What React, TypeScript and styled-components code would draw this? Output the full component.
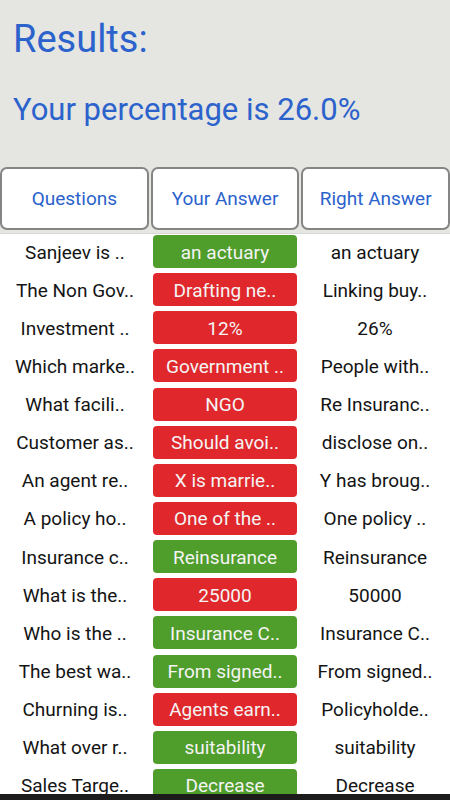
import React from 'react';
import styled, { createGlobalStyle } from 'styled-components';

const GlobalStyle = createGlobalStyle`
  html, body {
    margin: 0;
    padding: 0;
    background: #ffffff;
  }
  body {
    font-family: Roboto, "Noto Sans", sans-serif;
  }
`;

const Screen = styled.div`
  display: flex;
  flex-direction: column;
  width: 450px;
  height: 800px;
  overflow: hidden;
  background: #ffffff;
`;

const Summary = styled.div`
  display: flex;
  flex-direction: column;
  background: #e5e5e2;
  padding: 18px 13px 0 13px;
  height: 149px;
`;

const Title = styled.div`
  color: #2b62cc;
  font-size: 38px;
  line-height: 42px;
`;

const Percentage = styled.div`
  color: #2b62cc;
  font-size: 31px;
  line-height: 36px;
  margin-top: 32px;
`;

const HeaderRow = styled.div`
  display: flex;
  gap: 2px;
  padding: 0 0 3px 0;
  background: #e5e5e2;
  border-bottom: 1px solid #d8d8d6;
`;

const HeaderButton = styled.div`
  flex: 1;
  height: 59px;
  display: flex;
  align-items: center;
  justify-content: center;
  background: #ffffff;
  border: 2px solid #858585;
  border-radius: 7px;
  color: #2b62cc;
  font-size: 19px;
`;

const List = styled.div`
  flex: 1;
  display: flex;
  flex-direction: column;
  gap: 5.15px;
  padding-top: 1px;
  overflow: hidden;
`;

const Row = styled.div`
  display: grid;
  grid-template-columns: 150px 150px 150px;
  align-items: center;
  height: 33px;
  flex-shrink: 0;
`;

const Cell = styled.div`
  text-align: center;
  color: #141414;
  font-size: 19px;
  padding-top: 1px;
  white-space: nowrap;
`;

const Pill = styled.div<{ $correct: boolean }>`
  margin-left: 3px;
  width: 144px;
  height: 33px;
  box-sizing: border-box;
  padding-top: 1px;
  display: flex;
  align-items: center;
  justify-content: center;
  border-radius: 4px;
  background: ${(p) => (p.$correct ? '#4f9d2b' : '#e0282c')};
  color: #f4f4f4;
  font-size: 19px;
  white-space: nowrap;
`;

const NavEdge = styled.div`
  height: 6px;
  flex-shrink: 0;
  background: #1c1c1c;
`;

type Result = {
  question: string;
  yours: string;
  right: string;
  correct: boolean;
};

const results: Result[] = [
  { question: 'Sanjeev is ..', yours: 'an actuary', right: 'an actuary', correct: true },
  { question: 'The Non Gov..', yours: 'Drafting ne..', right: 'Linking buy..', correct: false },
  { question: 'Investment ..', yours: '12%', right: '26%', correct: false },
  { question: 'Which marke..', yours: 'Government ..', right: 'People with..', correct: false },
  { question: 'What facili..', yours: 'NGO', right: 'Re Insuranc..', correct: false },
  { question: 'Customer as..', yours: 'Should avoi..', right: 'disclose on..', correct: false },
  { question: 'An agent re..', yours: 'X is marrie..', right: 'Y has broug..', correct: false },
  { question: 'A policy ho..', yours: 'One of the ..', right: 'One policy ..', correct: false },
  { question: 'Insurance c..', yours: 'Reinsurance', right: 'Reinsurance', correct: true },
  { question: 'What is the..', yours: '25000', right: '50000', correct: false },
  { question: 'Who is the ..', yours: 'Insurance C..', right: 'Insurance C..', correct: true },
  { question: 'The best wa..', yours: 'From signed..', right: 'From signed..', correct: true },
  { question: 'Churning is..', yours: 'Agents earn..', right: 'Policyholde..', correct: false },
  { question: 'What over r..', yours: 'suitability', right: 'suitability', correct: true },
  { question: 'Sales Targe..', yours: 'Decrease', right: 'Decrease', correct: true },
];

const App: React.FC = () => {
  return (
    <Screen>
      <GlobalStyle />
      <Summary>
        <Title>Results:</Title>
        <Percentage>Your percentage is 26.0%</Percentage>
      </Summary>
      <HeaderRow>
        <HeaderButton>Questions</HeaderButton>
        <HeaderButton>Your Answer</HeaderButton>
        <HeaderButton>Right Answer</HeaderButton>
      </HeaderRow>
      <List>
        {results.map((r, i) => (
          <Row key={i}>
            <Cell>{r.question}</Cell>
            <Pill $correct={r.correct}>{r.yours}</Pill>
            <Cell>{r.right}</Cell>
          </Row>
        ))}
      </List>
      <NavEdge />
    </Screen>
  );
};

export default App;
